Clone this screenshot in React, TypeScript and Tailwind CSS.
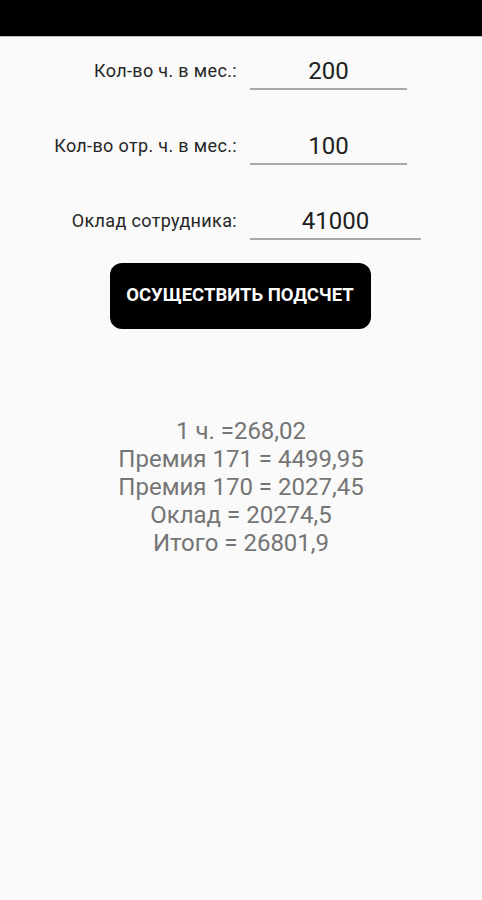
import React from "react";

const rows = [
  { label: "Кол-во ч. в мес.:", value: "200", width: "w-[157px]" },
  { label: "Кол-во отр. ч. в мес.:", value: "100", width: "w-[157px]" },
  { label: "Оклад сотрудника:", value: "41000", width: "w-[171px]" },
];

const results = [
  "1 ч. =268,02",
  "Премия 171 = 4499,95",
  "Премия 170 = 2027,45",
  "Оклад = 20274,5",
  "Итого = 26801,9",
];

export default function App() {
  return (
    <div
      className="min-h-[900px] w-[482px] bg-[#fafafa]"
      style={{ fontFamily: "Roboto, 'Noto Sans', sans-serif" }}
    >
      {/* status bar */}
      <div className="h-[37px] bg-black border-b border-[#bdbdbd]" />

      <div className="flex flex-col pt-[13px] gap-[35px]">
        {rows.map((row) => (
          <div key={row.label} className="flex h-[40px]">
            <div className="w-[237px] flex items-center justify-end pt-[1px] text-[18px] tracking-[0.35px] text-[#262626]">
              {row.label}
            </div>
            <div
              className={`${row.width} ml-[13px] flex items-center justify-center pt-[4px] border-b-2 border-[#a8a8a8] text-[24px] text-[#212121]`}
            >
              {row.value}
            </div>
          </div>
        ))}
      </div>

      <div className="flex justify-center mt-[23px] pr-[2px]">
        <button className="w-[261px] h-[66px] bg-black rounded-[12px] text-white font-bold text-[18.5px]">
          ОСУЩЕСТВИТЬ ПОДСЧЕТ
        </button>
      </div>

      <div className="mt-[88px] flex flex-col items-center text-[24px] leading-[28px] text-[#757575]">
        {results.map((r) => (
          <div key={r}>{r}</div>
        ))}
      </div>
    </div>
  );
}
